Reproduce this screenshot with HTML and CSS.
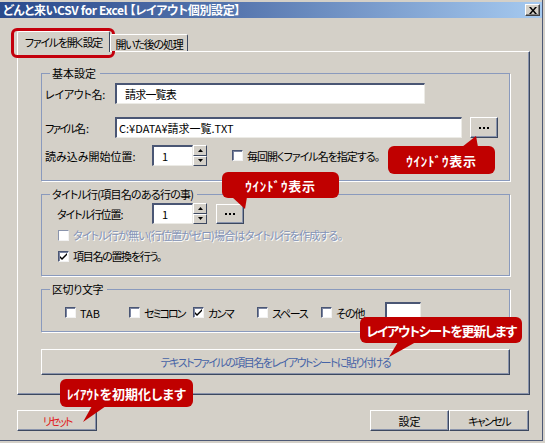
FILE: index.html
```html
<!DOCTYPE html>
<html lang="ja">
<head>
<meta charset="utf-8">
<title>レイアウト個別設定</title>
<link rel="stylesheet" href="styles.css">
</head>
<body>
<div class="window">
  <div class="titlebar">
    <span class="title">どんと来いCSV for Excel 【レイアウト個別設定】</span>
    <span class="close"><svg width="8" height="7" viewBox="0 0 8 7"><path d="M0 0h2l2 2.4L6 0h2L5 3.5 8 7H6L4 4.6 2 7H0l3-3.5z" fill="#000"/></svg></span>
  </div>

  <div class="tabs">
    <div class="tab active"><span class="t-tab1">ファイルを開く設定</span></div>
    <div class="tab"><span class="t-tab2">開いた後の処理</span></div>
  </div>

  <div class="panel">
    <fieldset class="group g1">
      <legend>基本設定</legend>
      <div class="row r1">
        <span class="lbl w70 t-layout">レイアウト名:</span>
        <div class="input in-layout"><span class="t-seikyu">請求一覧表</span></div>
      </div>
      <div class="row r2">
        <span class="lbl w70"><span class="t-file">ファイル</span>名:</span>
        <div class="input in-file">C:¥DATA¥請求一覧.TXT</div>
        <div class="btn dots"><svg width="10" height="2" viewBox="0 0 10 2"><rect x="0" width="2" height="2"/><rect x="4" width="2" height="2"/><rect x="8" width="2" height="2"/></svg></div>
      </div>
      <div class="row r3">
        <span class="lbl w107">読み込み開始位置:</span>
        <div class="spin">
          <div class="input in-num">1</div>
          <div class="spin-btns">
            <div class="sb"><svg width="5" height="3" viewBox="0 0 5 3"><path d="M2.5 0L5 3H0z"/></svg></div>
            <div class="sb"><svg width="5" height="3" viewBox="0 0 5 3"><path d="M0 0h5L2.5 3z"/></svg></div>
          </div>
        </div>
        <span class="check ml25"><span class="cb"></span><span class="t-maikai">毎回開くファイル名を指定する。</span></span>
      </div>
    </fieldset>

    <fieldset class="group g2">
      <legend class="t-tgrp">タイトル行(項目名のある行の事)</legend>
      <div class="row r4">
        <span class="lbl w95"><span class="t-tpos">タイトル行位置</span>:</span>
        <div class="spin">
          <div class="input in-num">1</div>
          <div class="spin-btns">
            <div class="sb"><svg width="5" height="3" viewBox="0 0 5 3"><path d="M2.5 0L5 3H0z"/></svg></div>
            <div class="sb"><svg width="5" height="3" viewBox="0 0 5 3"><path d="M0 0h5L2.5 3z"/></svg></div>
          </div>
        </div>
        <div class="btn dots dots2"><svg width="10" height="2" viewBox="0 0 10 2"><rect x="0" width="2" height="2"/><rect x="4" width="2" height="2"/><rect x="8" width="2" height="2"/></svg></div>
      </div>
      <div class="crow c1">
        <span class="check disabled"><span class="cb"></span><span class="t-dis">タイトル行が無い(行位置がゼロ)場合はタイトル行を作成する。</span></span>
      </div>
      <div class="crow c2">
        <span class="check"><span class="cb"><svg width="7" height="7" viewBox="0 0 7 7"><path d="M0 3l2 2 5-5v2L2 7 0 5z"/></svg></span><span class="t-koumoku">項目名の置換を行う。</span></span>
      </div>
    </fieldset>

    <fieldset class="group g3">
      <legend class="t-kugiri">区切り文字</legend>
      <div class="row r5">
        <span class="check item"><span class="cb"></span>TAB</span>
        <span class="check item"><span class="cb"></span><span class="t-semi">セミコロン</span></span>
        <span class="check item"><span class="cb"><svg width="7" height="7" viewBox="0 0 7 7"><path d="M0 3l2 2 5-5v2L2 7 0 5z"/></svg></span><span class="t-kanma">カンマ</span></span>
        <span class="check item"><span class="cb"></span><span class="t-space">スペース</span></span>
        <span class="check"><span class="cb"></span><span class="t-sono">その他</span></span>
        <div class="input in-other"></div>
      </div>
    </fieldset>

    <div class="btn big"><span class="t-big">テキストファイルの項目名をレイアウトシートに貼り付ける</span></div>
  </div>

  <div class="footer">
    <div class="btn fbtn reset"><span class="t-reset">リセット</span></div>
    <div class="spacer"></div>
    <div class="btn fbtn settei">設定</div>
    <div class="btn fbtn"><span class="t-cancel">キャンセル</span></div>
  </div>

  <div class="tab-mark"></div>

  <svg class="tails" width="545" height="443" viewBox="0 0 545 443">
    <path d="M462 147 L476 136 L478 147 Z"/>
    <path d="M232 197 L245 209 L247 197 Z"/>
    <path d="M398 342 L389 357 L416 342 Z"/>
    <path d="M92 406 L83 422 L106 406 Z"/>
  </svg>
  <div class="callout co1"><span class="t-co1">ｳｲﾝﾄﾞｳ表示</span></div>
  <div class="callout co2"><span class="t-co1">ｳｲﾝﾄﾞｳ表示</span></div>
  <div class="callout co3"><span class="t-co3">レイアウトシートを更新します</span></div>
  <div class="callout co4">ﾚｲｱｳﾄを初期化します</div>
</div>
</body>
</html>
```

FILE: styles.css
```css
* { box-sizing: border-box; }

body {
  margin: 0;
  font-family: "Noto Sans CJK JP", "Liberation Sans", sans-serif;
  font-size: 11px;
  font-feature-settings: "palt" 1;
  color: #000;
  background: #d4d0c8;
}

.window {
  position: relative;
  width: 545px;
  height: 443px;
  background: #d4d0c8;
  padding-top: 2px;
  box-shadow: inset -2px -2px 0 #d4d0c8, inset -3px -3px 0 #4d5976;
  overflow: hidden;
}

/* title bar */
.titlebar {
  height: 16px;
  width: 542px;
  background: linear-gradient(to right, #2a4a8c 0%, #5878b0 45%, #a6caf0 100%);
  display: flex;
  align-items: center;
  justify-content: space-between;
  padding: 0 2px 0 3px;
}
.title {
  color: #fff;
  font-weight: 700;
  font-size: 12px;
  line-height: 16px;
  white-space: nowrap;
  letter-spacing: -0.37px;
}
.close {
  width: 15px;
  height: 12px;
  background: #d4d0c8;
  border: 1px solid;
  border-color: #fff #404040 #404040 #fff;
  box-shadow: inset -1px -1px 0 #808080;
  display: flex;
  align-items: center;
  justify-content: center;
}

/* tabs */
.tabs {
  display: flex;
  align-items: flex-end;
  height: 20px;
  margin: 13px 0 0 17px;
  position: relative;
  z-index: 1;
}
.tab {
  height: 17px;
  border: 1px solid;
  border-bottom: none;
  border-color: #fff #3c4860 #fff #fff;
  border-radius: 2px 2px 0 0;
  background: #d4d0c8;
  display: flex;
  align-items: center;
  justify-content: center;
  white-space: nowrap;
  width: 78px;
  padding-top: 1px;
}
.tab.active {
  height: 21px;
  width: 93px;
  margin-bottom: -1px;
  padding-top: 0;
}

/* main panel */
.panel {
  margin-left: 17px;
  width: 513px;
  height: 344px;
  border: 1px solid;
  border-color: #fff #3c4860 #3c4860 #fff;
  box-shadow: inset -1px -1px 0 #8a94ac;
  padding: 14px 19px 0 23px;
}

.group {
  margin: 0;
  padding: 0 3px;
  border: 1px solid #8a9abd;
  box-shadow: 1px 1px 0 #fff;
  min-inline-size: 0;
}
.group legend {
  margin-left: 5px;
  padding: 0 4px 0 2px;
  line-height: 14px;
  white-space: nowrap;
}
.g1 { padding-top: 3px; padding-bottom: 14px; }
.g2 { margin-top: 6px; padding-top: 2px; padding-bottom: 11px; }
.g3 { margin-top: 6px; padding-top: 6px; padding-bottom: 8px; }

.row {
  display: flex;
  align-items: center;
  height: 21px;
}
.r1 { margin-bottom: 13px; }
.r2 { margin-bottom: 7px; }
.r4 { margin-left: 12px; }
.r5 { padding-left: 20px; }

.lbl { white-space: nowrap; flex: none; }
.w70 { width: 70px; }
.w107 { width: 107px; }
.w95 { width: 95px; }

.crow {
  display: flex;
  align-items: center;
  height: 16px;
  margin-left: 13px;
}
.c1 { margin-top: 3px; }
.c2 { margin-top: 5px; }

/* inputs */
.input {
  height: 21px;
  background: #fff;
  border-style: solid;
  border-width: 2px 1px 1px 2px;
  border-color: #4a5674 #ecebe6 #ecebe6 #4a5674;
  display: flex;
  align-items: center;
  padding-left: 2px;
  white-space: nowrap;
  flex: none;
}
.in-layout { width: 310px; padding-left: 8px; }
.in-file { width: 347px; }
.in-num { width: 41px; padding-left: 8px; }
.in-other { width: 36px; height: 21px; margin-left: 20px; }

.spin { display: flex; flex: none; }
.spin-btns {
  display: flex;
  flex-direction: column;
  width: 14px;
  height: 21px;
}
.sb {
  flex: 1;
  background: #d4d0c8;
  border: 1px solid;
  border-color: #fff #3c4860 #3c4860 #fff;
  display: flex;
  align-items: center;
  justify-content: center;
}
.sb svg, .dots svg { fill: #000; }

/* buttons */
.btn {
  background: #d4d0c8;
  border: 1px solid;
  border-color: #fff #3c4860 #3c4860 #fff;
  box-shadow: inset -1px -1px 0 #8a94ac;
  display: flex;
  align-items: center;
  justify-content: center;
  white-space: nowrap;
  flex: none;
}
.dots { width: 28px; height: 21px; margin-left: 8px; }
.dots2 { margin-left: 9px; height: 20px; }

.big {
  margin-top: 17px;
  margin-left: 0;
  width: 469px;
  height: 26px;
  color: #4663a6;
}

/* checkboxes */
.check {
  display: flex;
  align-items: center;
  white-space: nowrap;
  flex: none;
}
.cb {
  width: 11px;
  height: 11px;
  background: #fff;
  border: 1px solid;
  border-color: #4a5674 #f2f2f2 #f2f2f2 #4a5674;
  box-shadow: inset 1px 1px 0 #7a84a0;
  margin-right: 4px;
  display: flex;
  align-items: center;
  justify-content: center;
  flex: none;
}
.cb svg { fill: #000; }
.ml25 { margin-left: 25px; }
.item { width: 64px; }
.disabled { color: #8494b8; text-shadow: 1px 1px 0 #fff; }
.disabled .cb { border-color: #8a94ac #f2f2f2 #f2f2f2 #8a94ac; box-shadow: none; }

/* footer */
.footer {
  display: flex;
  margin: 15px 0 0 17px;
  width: 512px;
}
.spacer { flex: 1; }
.fbtn { height: 21px; width: 80px; }
.settei { width: 79px; }
.reset { color: #e02020; }

/* text width tuning (narrow kana of the original UI font) */
.t-tab1 { letter-spacing: -1.3px; }
.t-tab2 { letter-spacing: -1.2px; }
.t-layout { letter-spacing: -0.3px; }
.t-seikyu { letter-spacing: -0.8px; }
.t-file { letter-spacing: -2px; }
.t-maikai { letter-spacing: -1px; }
.t-tgrp { letter-spacing: -0.75px; }
.t-tpos { letter-spacing: -1.1px; }
.t-dis { letter-spacing: -0.8px; }
.t-koumoku { letter-spacing: -1.3px; }
.t-kugiri { letter-spacing: -0.4px; }
.t-semi { letter-spacing: -2px; }
.t-kanma { letter-spacing: -1.5px; }
.t-space { letter-spacing: -1.3px; }
.t-sono { letter-spacing: -1px; }
.t-big { letter-spacing: -1.5px; }
.t-reset { letter-spacing: -2px; }
.t-cancel { letter-spacing: -1.6px; }
.t-co1 { letter-spacing: 0.8px; }
.t-co3 { letter-spacing: -1.3px; }

/* annotations */
.tab-mark {
  position: absolute;
  left: 11px;
  top: 28px;
  width: 104px;
  height: 30px;
  border: 3px solid #c4000c;
  border-radius: 6px;
}
.tails {
  position: absolute;
  left: 0;
  top: 0;
  fill: #c00000;
  pointer-events: none;
}
.callout {
  position: absolute;
  background: #c00000;
  border-radius: 6px;
  color: #fff;
  font-weight: 700;
  font-size: 13px;
  display: flex;
  align-items: center;
  justify-content: center;
  white-space: nowrap;
}
.co1 { left: 388px; top: 146px; width: 107px; height: 28px; }
.co2 { left: 222px; top: 172px; width: 117px; height: 26px; }
.co3 { left: 360px; top: 317px; width: 162px; height: 26px; }
.co4 { left: 60px; top: 379px; width: 133px; height: 28px; }
```
